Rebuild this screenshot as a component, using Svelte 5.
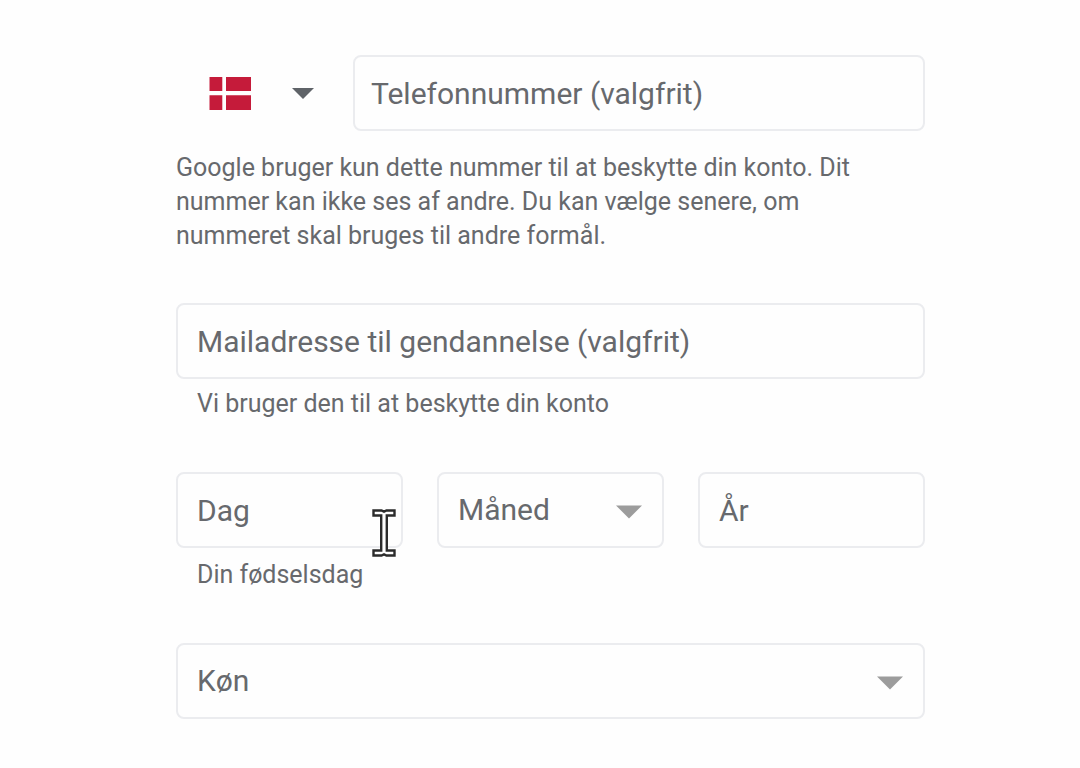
<script>
  const months = ['Januar', 'Februar', 'Marts', 'April', 'Maj', 'Juni', 'Juli', 'August', 'September', 'Oktober', 'November', 'December'];
  const genders = ['Kvinde', 'Mand', 'Vil ikke oplyses', 'Tilpasset'];

  let country = $state('dk');
  let phone = $state('');
  let email = $state('');
  let day = $state('');
  let month = $state('');
  let year = $state('');
  let gender = $state('');
</script>

{#snippet arrow()}
  <svg class="arrow" viewBox="0 0 26 14" aria-hidden="true"><path d="M0 0.5H26L13 13.5Z" /></svg>
{/snippet}

<form class="details">
  <section class="group">
    <div class="phone-row">
      <div class="country">
        <svg class="flag" viewBox="0 0 42 33" aria-hidden="true">
          <path d="M0.5 0H13.3V14H0.5ZM17 0H42V14H17ZM0.5 18.3H13.3V33H0.5ZM17 18.3H42V33H17Z" />
        </svg>
        <svg class="country-arrow" viewBox="0 0 22 11" aria-hidden="true"><path d="M0 0H22L11 11Z" /></svg>
        <select aria-label="Land" bind:value={country}>
          <option value="dk" aria-label="Danmark"></option>
        </select>
      </div>
      <input class="field phone" type="tel" placeholder="Telefonnummer (valgfrit)" aria-label="Telefonnummer (valgfrit)" aria-describedby="phone-note" bind:value={phone} />
    </div>
    <p class="note" id="phone-note">
      Google bruger kun dette nummer til at beskytte din konto. Dit nummer kan ikke ses af andre. Du kan vælge senere, om nummeret skal bruges til andre formål.
    </p>
  </section>

  <section class="group email">
    <input class="field" type="email" placeholder="Mailadresse til gendannelse (valgfrit)" aria-label="Mailadresse til gendannelse (valgfrit)" aria-describedby="email-hint" bind:value={email} />
    <p class="hint" id="email-hint">Vi bruger den til at beskytte din konto</p>
  </section>

  <section class="group birthday">
    <div class="date-row">
      <div class="cell">
        <input class="field" type="text" inputmode="numeric" placeholder="Dag" aria-label="Dag" aria-describedby="birthday-hint" bind:value={day} />
        <svg class="pointer" viewBox="0 0 26 50" aria-hidden="true">
          <path d="M2.5 2.5H10.5L13 3.7L15.5 2.5H23.5V7.5H15.8V42.5H23.5V47.5H15.5L13 46.3L10.5 47.5H2.5V42.5H10.2V7.5H2.5Z" />
        </svg>
      </div>
      <div class="cell">
        <select class="field" aria-label="Måned" bind:value={month}>
          <option value="" disabled hidden>Måned</option>
          {#each months as name}<option>{name}</option>{/each}
        </select>
        {@render arrow()}
      </div>
      <div class="cell">
        <input class="field" type="text" inputmode="numeric" placeholder="År" aria-label="År" bind:value={year} />
      </div>
    </div>
    <p class="hint birthday-hint" id="birthday-hint">Din fødselsdag</p>
  </section>

  <section class="group gender">
    <div class="cell">
      <select class="field" aria-label="Køn" bind:value={gender}>
        <option value="" disabled hidden>Køn</option>
        {#each genders as name}<option>{name}</option>{/each}
      </select>
      {@render arrow()}
    </div>
  </section>
</form>

<style>
  :global(body) {
    background: #fefefe;
  }
  .details {
    padding: 55px 155px 48px 176px;
    color: #67696d;
    font-family: Roboto, "Liberation Sans", sans-serif;
  }
  p {
    margin: 0;
  }
  .phone-row {
    display: flex;
  }
  .country {
    position: relative;
    flex: 0 0 177px;
    display: flex;
    align-items: center;
    gap: 41px;
    padding-left: 33px;
    box-sizing: border-box;
  }
  .country select {
    position: absolute;
    inset: 0;
    width: 100%;
    border: 0;
    background: none;
    appearance: none;
    cursor: pointer;
  }
  .flag {
    width: 42px;
    height: 33px;
    fill: #c51b3a;
  }
  .country-arrow {
    width: 22px;
    height: 11px;
    fill: #5f6368;
  }
  .field {
    display: block;
    width: 100%;
    min-width: 0;
    height: 76px;
    box-sizing: border-box;
    margin: 0;
    padding: 0 19px;
    border: 2px solid #ebecef;
    border-radius: 8px;
    background: #fefefe;
    color: #67696d;
    font: 30px/36px Roboto, "Liberation Sans", sans-serif;
    appearance: none;
  }
  .field::placeholder {
    color: #67696d;
    opacity: 1;
  }
  .field.phone {
    flex: 1;
    padding: 0 16px;
  }
  .note,
  .hint {
    font-size: 25px;
    line-height: 34px;
  }
  .note {
    margin-top: 20px;
    padding-right: 48px;
  }
  .hint {
    margin-top: 8px;
    padding-left: 21px;
  }
  .birthday-hint {
    margin-top: 10px;
  }
  .email {
    margin-top: 50px;
  }
  .birthday,
  .gender {
    margin-top: 51px;
  }
  .date-row {
    display: grid;
    grid-template-columns: repeat(3, 1fr);
    gap: 34px;
  }
  .cell {
    position: relative;
  }
  .arrow {
    position: absolute;
    right: 22px;
    top: 33px;
    width: 26px;
    height: 14px;
    fill: #9c9c9c;
    pointer-events: none;
  }
  .pointer {
    position: absolute;
    right: 6px;
    top: 36px;
    width: 26px;
    height: 50px;
    fill: #fefefe;
    stroke: #2b2b2b;
    stroke-width: 2.4;
    pointer-events: none;
  }
</style>
